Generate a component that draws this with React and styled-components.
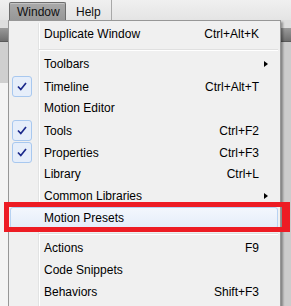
import React from 'react';
import styled, { createGlobalStyle } from 'styled-components';

const GlobalStyle = createGlobalStyle`
  html, body {
    margin: 0;
    padding: 0;
    background: #ececec;
  }
  body {
    font-family: "Liberation Sans", Arial, sans-serif;
    font-size: 12px;
    color: #000;
  }
`;

const menuItems = [
  { label: 'Duplicate Window', shortcut: 'Ctrl+Alt+K' },
  { sep: true },
  { label: 'Toolbars', submenu: true },
  { label: 'Timeline', shortcut: 'Ctrl+Alt+T', checked: true },
  { label: 'Motion Editor' },
  { label: 'Tools', shortcut: 'Ctrl+F2', checked: true },
  { label: 'Properties', shortcut: 'Ctrl+F3', checked: true },
  { label: 'Library', shortcut: 'Ctrl+L' },
  { label: 'Common Libraries', submenu: true },
  { label: 'Motion Presets', hover: true },
  { sep: true },
  { label: 'Actions', shortcut: 'F9' },
  { label: 'Code Snippets' },
  { label: 'Behaviors', shortcut: 'Shift+F3' },
];

function CheckMark() {
  return (
    <svg width="10" height="9" viewBox="0 0 10 9">
      <path d="M1 4.5 L3.8 7.5 L9 1" fill="none" stroke="#1c2a8c" strokeWidth="1.7" />
    </svg>
  );
}

function App() {
  return (
    <Page>
      <GlobalStyle />
      <MenuBar>
        <MenuTitle $active>Window</MenuTitle>
        <MenuTitle>Help</MenuTitle>
        <BarDivider />
      </MenuBar>
      <Workspace>
        <ToolStrip />
        <Panels>
          <SidePanel />
          <StagePanel />
        </Panels>
      </Workspace>

      <Dropdown>
        {menuItems.map((item, i) =>
          item.sep ? (
            <Separator key={i} />
          ) : (
            <Item key={i} $hover={item.hover}>
              <CheckCell>
                {item.checked && (
                  <CheckBox>
                    <CheckMark />
                  </CheckBox>
                )}
              </CheckCell>
              <Label>{item.label}</Label>
              <Shortcut>{item.shortcut}</Shortcut>
              <ArrowCell>{item.submenu && <Arrow />}</ArrowCell>
            </Item>
          )
        )}
      </Dropdown>

      <Highlight />
    </Page>
  );
}

export default App;

const Page = styled.div`
  position: relative;
  width: 291px;
  height: 306px;
  overflow: hidden;
  background: #ececec;
`;

const MenuBar = styled.div`
  display: flex;
  align-items: stretch;
  height: 20px;
  padding: 2px 0 0 9px;
  box-sizing: border-box;
  background: linear-gradient(#f0f0f0, #e4e4e4);
`;

const MenuTitle = styled.div`
  display: flex;
  align-items: center;
  padding: 0 ${p => (p.$active ? '7px' : '9px')};
  width: ${p => (p.$active ? '57px' : 'auto')};
  box-sizing: border-box;
  font-size: 12px;
  color: #111;
  border: 1px solid ${p => (p.$active ? '#6d6d6d' : 'transparent')};
  border-bottom: none;
  border-radius: 2px 2px 0 0;
  background: ${p => (p.$active ? 'linear-gradient(#a9a9a9, #979797)' : 'transparent')};
  box-shadow: ${p => (p.$active ? 'inset 0 1px 0 #c4c4c4' : 'none')};
`;

const BarDivider = styled.div`
  width: 1px;
  margin: -2px 0 0 0;
  background: #a8a8a8;
`;

const Workspace = styled.div`
  padding-top: 8px;
  background: #dedede;
`;

const ToolStrip = styled.div`
  height: 13px;
  background: linear-gradient(#9a9a9a, #6e6e6e);
  border-bottom: 1px solid #5a5a5a;
`;

const Panels = styled.div`
  display: flex;
  height: 270px;
`;

const SidePanel = styled.div`
  width: 8px;
  background: linear-gradient(#cfcfcf 0, #cfcfcf 41px, #f4f4f4 41px);
`;

const StagePanel = styled.div`
  flex: 1;
  background: #cccccc;
`;

const Dropdown = styled.div`
  position: absolute;
  left: 8px;
  top: 20px;
  width: 273px;
  height: 300px;
  box-sizing: border-box;
  padding: 2px 2px 2px 1px;
  background: #f0f0f0;
  border: 1px solid #979797;
  box-shadow: 2px 2px 2px rgba(0, 0, 0, 0.35);

  &::before {
    content: '';
    position: absolute;
    left: 29px;
    top: 2px;
    bottom: 0;
    width: 1px;
    background: #e2e3e3;
    border-right: 1px solid #ffffff;
  }
`;

const Item = styled.div`
  position: relative;
  display: grid;
  grid-template-columns: 33px 1fr auto 18px;
  align-items: center;
  height: 22px;
  box-sizing: border-box;
  border: 1px solid ${p => (p.$hover ? '#b7d2f2' : 'transparent')};
  border-radius: 3px;
  background: ${p => (p.$hover ? 'linear-gradient(#f3f7fd, #e4edf9)' : 'transparent')};
  z-index: 1;
`;

const CheckCell = styled.div`
  display: flex;
  align-items: center;
  padding-left: 1px;
  height: 100%;
`;

const CheckBox = styled.div`
  display: flex;
  align-items: center;
  justify-content: center;
  width: 20px;
  height: 21px;
  box-sizing: border-box;
  border: 1px solid #a8c8ef;
  border-radius: 3px;
  background: #e6eefa;
`;

const Label = styled.span`
  white-space: nowrap;
`;

const Shortcut = styled.span`
  white-space: nowrap;
  text-align: right;
`;

const ArrowCell = styled.div`
  display: flex;
  align-items: center;
  padding-left: 5px;
`;

const Arrow = styled.div`
  width: 0;
  height: 0;
  border-top: 3.5px solid transparent;
  border-bottom: 3.5px solid transparent;
  border-left: 4px solid #000;
`;

const Separator = styled.div`
  position: relative;
  height: 8px;
  margin-left: 29px;
  z-index: 1;

  &::after {
    content: '';
    position: absolute;
    left: 0;
    right: 0;
    top: 4px;
    height: 1px;
    background: #e0e0e0;
    border-bottom: 1px solid #ffffff;
  }
`;

const Highlight = styled.div`
  position: absolute;
  left: 4px;
  top: 202px;
  width: 286px;
  height: 30px;
  box-sizing: border-box;
  border: 5px solid #ed1c24;
  border-right-width: 8px;
  z-index: 2;
`;
